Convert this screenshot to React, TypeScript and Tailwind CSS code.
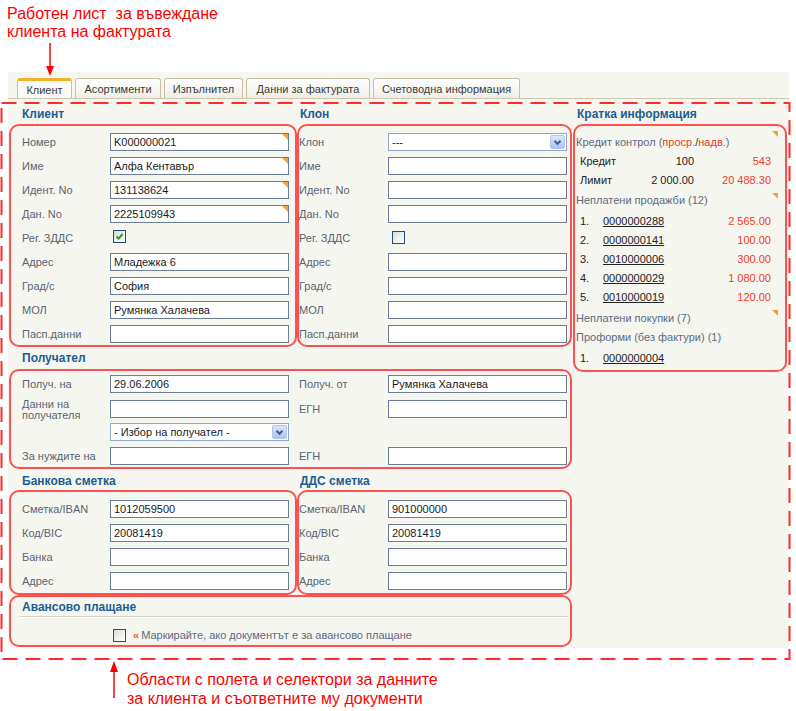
import React from 'react'

const tabs = [
  { label: 'Клиент', w: 'w-[55px]', active: true },
  { label: 'Асортименти', w: 'w-[86px]' },
  { label: 'Изпълнител', w: 'w-[79px]' },
  { label: 'Данни за фактурата', w: 'w-[124px]' },
  { label: 'Счетоводна информация', w: 'w-[147px]' },
]

const unpaid = [
  ['1.', '0000000288', '2 565.00'],
  ['2.', '0000000141', '100.00'],
  ['3.', '0010000006', '300.00'],
  ['4.', '0000000029', '1 080.00'],
  ['5.', '0010000019', '120.00'],
]

function Corner({ className = 'right-0 top-0' }: { className?: string }) {
  return (
    <span className={`absolute h-0 w-0 border-l-[6px] border-t-[6px] border-l-transparent border-t-[#f4a233] ${className}`} />
  )
}

function Input({ value = '', corner = false }: { value?: string; corner?: boolean }) {
  return (
    <div className="relative h-[18px] w-[179px] shrink-0 border border-[#6c7e96] bg-white pl-[3px] text-[11px] leading-[16px] text-[#1a1a1a]">
      {value}
      {corner && <Corner />}
    </div>
  )
}

function Select({ value }: { value: string }) {
  return (
    <div className="flex h-[18px] w-[179px] shrink-0 items-center border border-[#8fa9cc] bg-white text-[11px] text-[#1a1a1a]">
      <span className="flex-1 pl-[3px]">{value}</span>
      <span className="mr-px flex h-[14px] w-[15px] items-center justify-center rounded-[2px] border border-[#b3c6ee] bg-[linear-gradient(180deg,#dde7fd,#aac2f4)]">
        <svg width="9" height="7" viewBox="0 0 9 7">
          <path d="M1.5 1.8 L4.5 4.8 L7.5 1.8" fill="none" stroke="#4a5d82" strokeWidth="2" />
        </svg>
      </span>
    </div>
  )
}

function Check({ checked = false }: { checked?: boolean }) {
  return (
    <div className="flex h-[13px] w-[13px] shrink-0 items-center justify-center border border-[#1f4f7d] bg-[linear-gradient(135deg,#dcdcd5,#ffffff)]">
      {checked && (
        <svg width="9" height="9" viewBox="0 0 9 9">
          <path d="M1.5 4.5 L3.6 6.6 L7.6 2" fill="none" stroke="#21a121" strokeWidth="2" />
        </svg>
      )}
    </div>
  )
}

function Row({ label, lw = 'w-[88px]', children }: { label: string; lw?: string; children: React.ReactNode }) {
  return (
    <div className="flex h-[18px] items-center">
      <span className={`${lw} shrink-0 text-[11px] text-[#5a6472]`}>{label}</span>
      {children}
    </div>
  )
}

function Info({ children, corner }: { children: React.ReactNode; corner?: string }) {
  return (
    <div className="relative flex h-[19px] items-center pl-px text-[11px] text-[#5b6b82]">
      {children}
      {corner && <Corner className={corner} />}
    </div>
  )
}

const box = 'rounded-[10px] border-2 border-[#ff5050]'
const head = 'text-[12px] font-bold text-[#1b5d92]'

export default function App() {
  return (
    <div className="relative h-[711px] w-[796px] overflow-hidden bg-white font-['Liberation_Sans',Arial,sans-serif]">
      {/* annotation title */}
      <div className="whitespace-pre pl-[7px] pt-[5px] text-[16px] leading-[18px] text-[#ff0000]">
        {'Работен лист  за въвеждане\nклиента на фактурата'}
      </div>

      {/* application panel */}
      <div className="ml-[8px] mt-[31px] h-[576px] w-[781px] bg-[#f6f6f0]">
        <div className="flex h-[27px] items-end gap-[3px] border-b border-[#cdc6aa] pl-[9px]">
          {tabs.map((t) => (
            <div
              key={t.label}
              className={`${t.w} flex h-[20px] items-center justify-center rounded-t-[3px] border border-b-0 border-[#c8c0a0] pt-px text-[11px] text-[#3a3a3a] ${
                t.active ? 'border-t-[3px] border-t-[#f3b02e] bg-[#fbfbf8]' : 'bg-[linear-gradient(180deg,#ffffff,#efeee6)]'
              }`}
            >
              {t.label}
            </div>
          ))}
        </div>

        <div className="mt-[4px] flex">
          {/* main forms */}
          <div className="ml-px w-[563px]">
            <div className={`flex h-[21px] items-center ${head}`}>
              <div className="w-[288px] pl-[13px]">Клиент</div>
              <div className="pl-[3px]">Клон</div>
            </div>
            <div className="flex">
              <div className={`flex h-[223px] w-[288px] flex-col gap-[6px] pl-[11px] pt-[7px] ${box}`}>
                <Row label="Номер"><Input value="K000000021" corner /></Row>
                <Row label="Име"><Input value="Алфа Кентавър" corner /></Row>
                <Row label="Идент. No"><Input value="131138624" corner /></Row>
                <Row label="Дан. No"><Input value="2225109943" corner /></Row>
                <Row label="Рег. ЗДДС"><span className="-mt-[3px] ml-[3px]"><Check checked /></span></Row>
                <Row label="Адрес"><Input value="Младежка 6" /></Row>
                <Row label="Град/с"><Input value="София" /></Row>
                <Row label="МОЛ"><Input value="Румянка Халачева" /></Row>
                <Row label="Пасп.данни"><Input /></Row>
              </div>
              <div className={`flex h-[223px] w-[275px] flex-col gap-[6px] pt-[7px] ${box}`}>
                <Row label="Клон" lw="w-[89px]"><Select value="---" /></Row>
                <Row label="Име" lw="w-[89px]"><Input /></Row>
                <Row label="Идент. No" lw="w-[89px]"><Input /></Row>
                <Row label="Дан. No" lw="w-[89px]"><Input /></Row>
                <Row label="Рег. ЗДДС" lw="w-[89px]"><span className="-mt-[2px] ml-[4px]"><Check /></span></Row>
                <Row label="Адрес" lw="w-[89px]"><Input /></Row>
                <Row label="Град/с" lw="w-[89px]"><Input /></Row>
                <Row label="МОЛ" lw="w-[89px]"><Input /></Row>
                <Row label="Пасп.данни" lw="w-[89px]"><Input /></Row>
              </div>
            </div>

            <div className={`flex h-[22px] items-center pl-[13px] ${head}`}>Получател</div>
            <div className={`h-[100px] w-[563px] pl-[11px] pt-[4px] ${box}`}>
              <div className="flex">
                <Row label="Получ. на"><Input value="29.06.2006" /></Row>
                <div className="ml-[10px]"><Row label="Получ. от" lw="w-[89px]"><Input value="Румянка Халачева" /></Row></div>
              </div>
              <div className="mt-[7px] flex">
                <div className="flex h-[18px] items-start">
                  <span className="-mt-px w-[88px] shrink-0 text-[11px] leading-[11px] text-[#5a6472]">Данни на<br />получателя</span>
                  <Input />
                </div>
                <div className="ml-[10px]"><Row label="ЕГН" lw="w-[89px]"><Input /></Row></div>
              </div>
              <div className="mt-[5px] flex pl-[88px]">
                <Select value="- Избор на получател -" />
              </div>
              <div className="mt-[6px] flex">
                <Row label="За нуждите на"><Input /></Row>
                <div className="ml-[10px]"><Row label="ЕГН" lw="w-[89px]"><Input /></Row></div>
              </div>
            </div>

            <div className={`flex h-[21px] items-center pt-[3px] ${head}`}>
              <div className="w-[288px] pl-[13px]">Банкова сметка</div>
              <div className="pl-[3px]">ДДС сметка</div>
            </div>
            <div className="flex">
              <div className={`flex h-[105px] w-[288px] flex-col gap-[6px] pl-[11px] pt-[8px] ${box}`}>
                <Row label="Сметка/IBAN"><Input value="1012059500" /></Row>
                <Row label="Код/BIC"><Input value="20081419" /></Row>
                <Row label="Банка"><Input /></Row>
                <Row label="Адрес"><Input /></Row>
              </div>
              <div className={`flex h-[105px] w-[275px] flex-col gap-[6px] pt-[8px] ${box}`}>
                <Row label="Сметка/IBAN" lw="w-[89px]"><Input value="901000000" /></Row>
                <Row label="Код/BIC" lw="w-[89px]"><Input value="20081419" /></Row>
                <Row label="Банка" lw="w-[89px]"><Input /></Row>
                <Row label="Адрес" lw="w-[89px]"><Input /></Row>
              </div>
            </div>

            <div className={`h-[52px] w-[563px] pt-[3px] ${box}`}>
              <div className={`pl-[11px] leading-[14px] ${head}`}>Авансово плащане</div>
              <div className="ml-[8px] mt-[2px] w-[549px] border-b border-t border-b-white border-t-[#d8d7cb]" />
              <div className="mt-[9px] flex items-center pl-[102px] text-[11px]">
                <Check />
                <span className="ml-[7px] font-bold text-[#e8602c]">«</span>
                <span className="ml-[2px] text-[#5b6b82]">Маркирайте, ако документът е за авансово плащане</span>
              </div>
            </div>
          </div>

          {/* quick info */}
          <div className="ml-px w-[215px]">
            <div className={`flex h-[21px] items-center pl-[4px] ${head}`}>Кратка информация</div>
            <div className={`h-[248px] w-[214px] pt-[6px] ${box}`}>
              <div className="relative flex h-[20px] items-center pl-px text-[11px] text-[#5b6b82]">
                Кредит контрол (<span className="text-[#f23a1c]">проср.</span>
                <span className="text-[#333]">/</span>
                <span className="text-[#f23a1c]">надв.</span>)
                <Corner className="right-[7px] top-[-1px]" />
              </div>
              <div className="flex h-[19px] items-center pl-[5px] pr-[14px] text-[11px] text-[#222]">
                <span className="w-[64px]">Кредит</span>
                <span className="w-[50px] text-right">100</span>
                <span className="flex-1 text-right text-[#f23a1c]">543</span>
              </div>
              <div className="flex h-[19px] items-center pl-[5px] pr-[14px] text-[11px] text-[#222]">
                <span className="w-[64px]">Лимит</span>
                <span className="w-[50px] text-right">2 000.00</span>
                <span className="flex-1 text-right text-[#f23a1c]">20 488.30</span>
              </div>
              <div className="mt-px">
                <Info corner="right-[7px] top-[2px]">Неплатени продажби (12)</Info>
              </div>
              <div className="mt-[2px]">
                {unpaid.map(([n, doc, sum]) => (
                  <div key={doc} className="flex h-[19px] items-center pl-[5px] pr-[14px] text-[11px] text-[#222]">
                    <span className="w-[23px]">{n}</span>
                    <span className="underline">{doc}</span>
                    <span className="flex-1 text-right text-[#f23a1c]">{sum}</span>
                  </div>
                ))}
              </div>
              <div className="mt-[2px]">
                <Info corner="right-[7px] top-[1px]">Неплатени покупки (7)</Info>
              </div>
              <Info>Проформи (без фактури) (1)</Info>
              <div className="mt-[2px] flex h-[19px] items-center pl-[5px] text-[11px] text-[#222]">
                <span className="w-[23px]">1.</span>
                <span className="underline">0000000004</span>
              </div>
            </div>
          </div>
        </div>
      </div>

      {/* annotation footer */}
      <div className="pl-[127px] pt-[22px] text-[16px] leading-[19px] text-[#ff0000]">
        Области с полета и селектори за данните
        <br />
        за клиента и съответните му документи
      </div>

      {/* annotation drawing: dashed frame and arrows */}
      <svg className="pointer-events-none absolute left-0 top-0" width="796" height="711" viewBox="0 0 796 711">
        <rect x="1.5" y="103" width="788" height="556" fill="none" stroke="#ff2b2b" strokeWidth="2" strokeDasharray="15 8" />
        <line x1="50" y1="43" x2="50" y2="68" stroke="#ff0000" strokeWidth="1.5" />
        <polygon points="46,66 54,66 50,76" fill="#ff0000" />
        <line x1="114" y1="670" x2="114" y2="698" stroke="#ff0000" strokeWidth="1.5" />
        <polygon points="110,672 118,672 114,661" fill="#ff0000" />
      </svg>
    </div>
  )
}
